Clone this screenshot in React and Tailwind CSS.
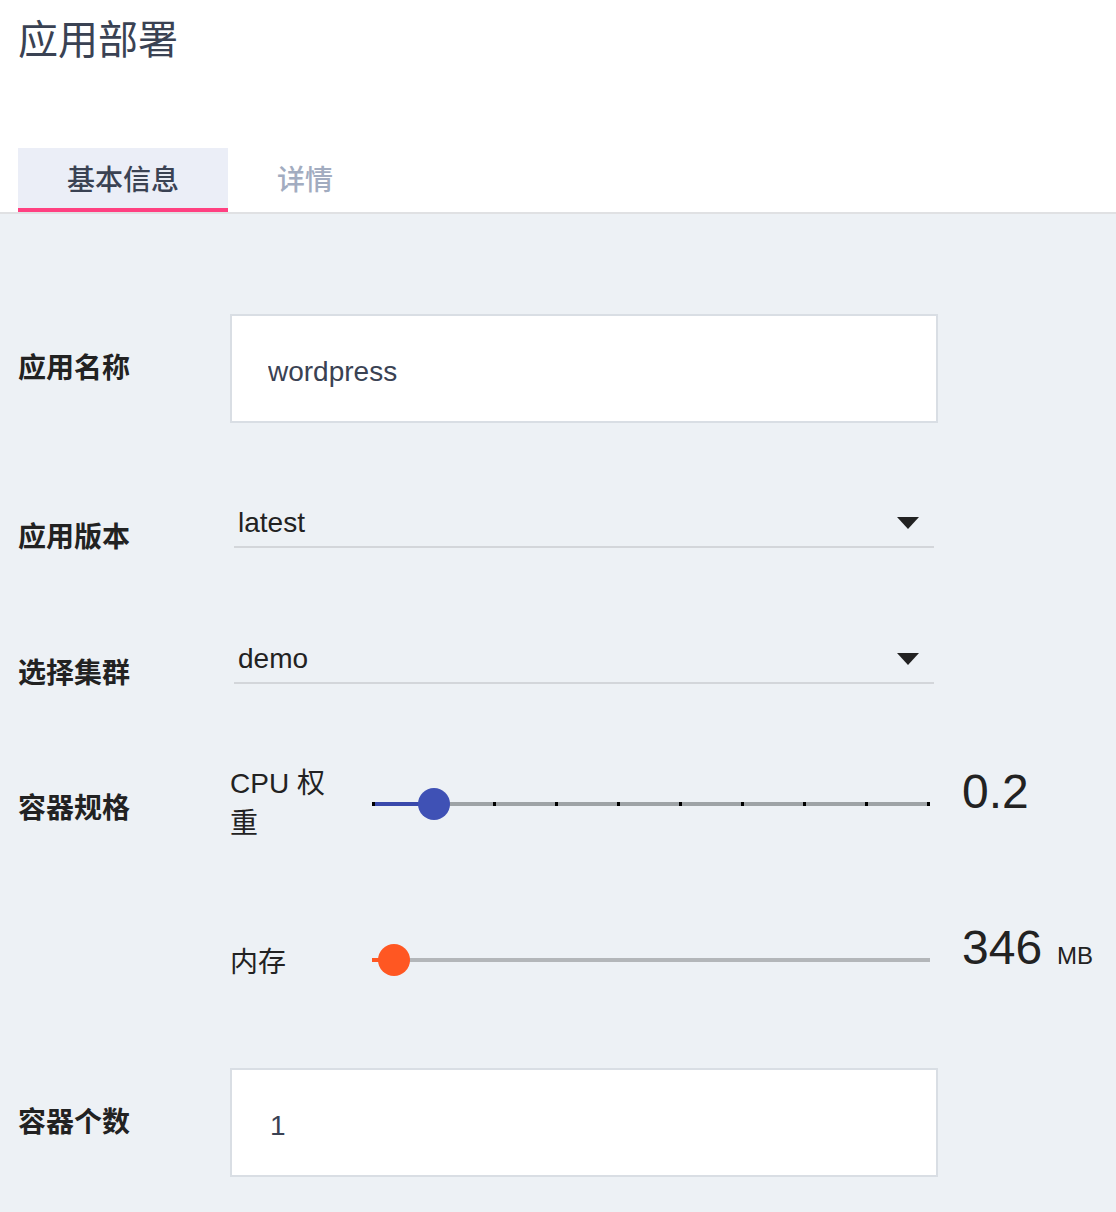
import React from "react";

const FONT = "font-['Liberation_Sans','Noto_Sans_CJK_SC',sans-serif]";

// step slider with optional tick marks
const Slider = ({ fill, track, thumb, fillColor, ticks }) => {
  const tickList = ticks ? Array.from({ length: ticks }, (_, i) => Math.max(0, i * 62 - 3)) : [];
  return (
    <div className="relative w-[558px] h-[32px] shrink-0">
      <div className={`absolute left-0 right-0 top-[14px] h-[4px] ${track}`} />
      <div className={`absolute left-0 top-[14px] h-[4px] ${fillColor}`} style={{ width: fill }} />
      {tickList.map((left) => (
        <div key={left} className="absolute top-[14px] h-[4px] w-[3px] bg-black" style={{ left }} />
      ))}
      <div className={`absolute top-0 w-8 h-8 rounded-full ${thumb}`} style={{ left: fill - 16 }} />
    </div>
  );
};

const Select = ({ value }) => (
  <div className="ml-1 w-[700px] h-[48px] flex items-center justify-between pl-1 border-b-2 border-[#d3d6da]">
    <span className="text-[28px] leading-[28px] text-[#222]">{value}</span>
    <svg width="22" height="12" viewBox="0 0 22 12" className="mr-[15px]">
      <polygon points="0,0 22,0 11,12" fill="#222" />
    </svg>
  </div>
);

const Label = ({ children, className = "" }) => (
  <div className={`w-[212px] shrink-0 text-[28px] leading-[28px] font-bold text-[#222] ${className}`}>
    {children}
  </div>
);

const TextBox = ({ value, pad }) => (
  <input
    readOnly
    defaultValue={value}
    className={`w-[708px] h-[109px] bg-white border-2 border-[#d9dee4] ${pad} pt-[6px] text-[28px] text-[#3a4253] outline-none`}
  />
);

export default function App() {
  return (
    <div className={`${FONT} min-h-screen flex flex-col bg-white`}>
      <div className="pl-[18px] pt-[20px] text-[40px] leading-[40px] text-[#3a4253]">应用部署</div>

      {/* tabs */}
      <div className="mt-[88px] flex pl-[18px] border-b-2 border-[#e0e1e3]">
        <div className="h-[64px] px-[49px] pt-[19px] bg-[#ebeef7] border-b-4 border-[#ff4081] text-[28px] leading-[28px] font-medium text-[#3a4253]">
          基本信息
        </div>
        <div className="h-[64px] px-[49px] pt-[19px] text-[28px] leading-[28px] font-medium text-[#a2acc0]">
          详情
        </div>
      </div>

      <div className="flex-1 bg-[#edf1f5] pl-[18px] pt-[100px] pb-[40px]">
        <div className="flex items-center">
          <Label>应用名称</Label>
          <TextBox value="wordpress" pad="pl-[36px]" />
        </div>

        <div className="mt-[77px] flex items-start h-[48px]">
          <Label className="mt-[24px]">应用版本</Label>
          <Select value="latest" />
        </div>

        <div className="mt-[88px] flex items-start h-[48px]">
          <Label className="mt-[24px]">选择集群</Label>
          <Select value="demo" />
        </div>

        <div className="mt-[80px] flex items-start">
          <Label className="mt-[31px]">容器规格</Label>
          <div className="flex flex-col">
            <div className="flex items-start">
              <div className="w-[142px] shrink-0 pr-[24px] text-[28px] leading-[40px] text-[#222]">CPU 权重</div>
              <div className="mt-[24px]">
                <Slider fill={62} ticks={10} track="bg-[#9ea3a6]" fillColor="bg-[#3949ab]" thumb="bg-[#3f51b5]" />
              </div>
              <div className="ml-[32px] mt-[4px] text-[48px] leading-[48px] text-[#222]">0.2</div>
            </div>
            <div className="mt-[80px] flex items-start">
              <div className="w-[142px] shrink-0 mt-[19px] text-[28px] leading-[40px] text-[#222]">内存</div>
              <div className="mt-[20px]">
                <Slider fill={22} track="bg-[#b3b6b9]" fillColor="bg-[#ff5722]" thumb="bg-[#ff5722]" />
              </div>
              <div className="ml-[32px] flex items-baseline text-[#222]">
                <span className="text-[48px] leading-[48px]">346</span>
                <span className="ml-[15px] text-[24px]">MB</span>
              </div>
            </div>
          </div>
        </div>

        <div className="mt-[85px] flex items-center">
          <Label>容器个数</Label>
          <TextBox value="1" pad="pl-[38px]" />
        </div>
      </div>
    </div>
  );
}
